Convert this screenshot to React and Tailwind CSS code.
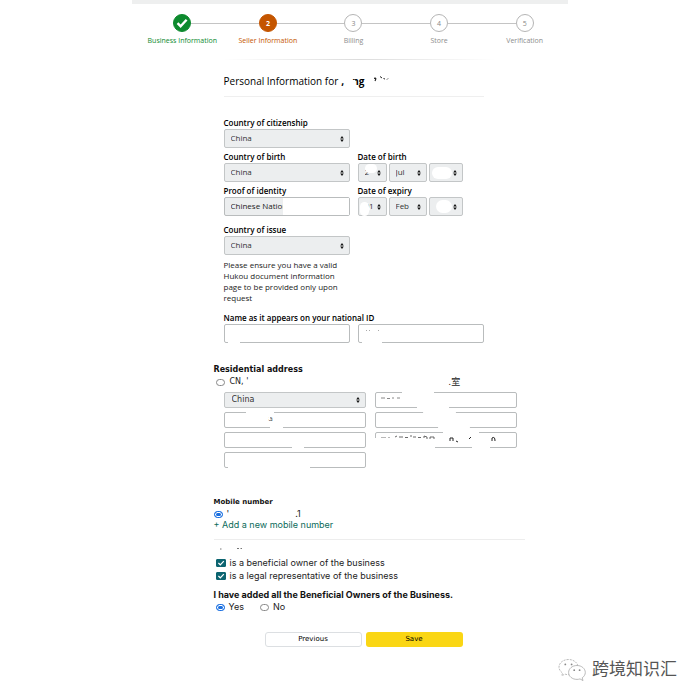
import { useState } from "react";

const steps = [
  { id: 1, name: "Business Information", state: "done" },
  { id: 2, name: "Seller Information", state: "current" },
  { id: 3, name: "Billing", state: "next" },
  { id: 4, name: "Store", state: "next" },
  { id: 5, name: "Verification", state: "next" },
];

const circleStyles = {
  done: "bg-[#0d8a2e] border-[#0d8a2e] text-white font-bold",
  current: "bg-[#c45500] border-[#c45500] text-white font-bold",
  next: "bg-white border-[#b5b5b5] text-[#888]",
};

const labelStyles = {
  done: "text-[#0d8a2e]",
  current: "text-[#c45500]",
  next: "text-[#8d8d8d]",
};

const Stepper = () => (
  <ol className="flex pt-[10px] pl-2">
    {steps.map((step, idx) => (
      <li key={step.id} className="flex-1 min-w-0 flex flex-col items-center">
        <div className="flex items-center w-full">
          <span className={idx === 0 ? "flex-1" : "flex-1 h-px bg-[#c4c4c4]"} />
          <span
            className={`flex items-center justify-center size-[18px] rounded-full border text-[7px] leading-none ${circleStyles[step.state]}`}
          >
            {step.state === "done" ? (
              <svg viewBox="0 0 12 12" className="size-3" fill="none" stroke="currentColor" strokeWidth="2.4">
                <path d="M1.5 6.2 L4.6 9.2 L10.6 2.8" />
              </svg>
            ) : (
              step.id
            )}
          </span>
          <span className={idx === steps.length - 1 ? "flex-1" : "flex-1 h-px bg-[#c4c4c4]"} />
        </div>
        <span className={`mt-1 text-[7px] leading-[10px] whitespace-nowrap ${labelStyles[step.state]}`}>
          {step.name}
        </span>
      </li>
    ))}
  </ol>
);

// white smudge that hides private details
const Patch = ({ className }) => (
  <span className={`absolute bg-white pointer-events-none ${className}`} />
);

const Arrows = () => (
  <svg
    viewBox="0 0 6 8"
    className="absolute right-[5px] top-1/2 -translate-y-1/2 w-[6px] h-2 pointer-events-none"
    fill="#111"
  >
    <path d="M3 1 L4.8 3.4 H1.2 Z M3 7 L4.8 4.6 H1.2 Z" />
  </svg>
);

const Select = ({ id, label, value, className = "", size = "h-[19px] text-[8px] pl-[6px]", children }) => (
  <div className={`relative ${className}`}>
    <select
      id={id}
      aria-label={label}
      defaultValue={value}
      className={`block w-full appearance-none rounded-[2px] border border-[#c3c6c7] bg-[#eceeef] pb-px text-[#333] ${size}`}
    >
      <option value={value}>{value}</option>
    </select>
    {children}
    <Arrows />
  </div>
);

const Label = ({ htmlFor, children }) => (
  <label htmlFor={htmlFor} className="block text-[8px] leading-[12px] font-semibold text-black whitespace-nowrap">
    {children}
  </label>
);

const Input = ({ id, label, value = "", size = "h-[19px]", className = "", children }) => (
  <div className={`relative ${className}`}>
    <input
      id={id}
      aria-label={label}
      type="text"
      defaultValue={value}
      className={`block w-full rounded-[2px] border border-[#b9bcbd] bg-white pl-[6px] text-[8px] text-[#222] ${size}`}
    />
    {children}
  </div>
);

const Radio = ({ name, label, checked, onChange, children }) => (
  <label className="flex items-center gap-1 leading-[12px]">
    <input
      type="radio"
      name={name}
      aria-label={label}
      checked={checked}
      onChange={onChange}
      className="appearance-none w-[9px] h-[7px] rounded-full border border-[#888] bg-white checked:border-[#1a6fe0] checked:bg-[#1a6fe0] checked:shadow-[inset_0_0_0_1px_white]"
    />
    {children}
  </label>
);

const Check = ({ children }) => {
  const [on, setOn] = useState(true);
  return (
    <label className="flex items-center gap-1 h-[13px]">
      <span className="relative flex">
        <input
          type="checkbox"
          checked={on}
          onChange={() => setOn(!on)}
          className="appearance-none w-[10px] h-2 rounded-[1px] border border-[#0c6470] checked:bg-[#0c6470]"
        />
        {on && (
          <svg
            viewBox="0 0 10 8"
            className="absolute inset-0 w-[10px] h-2 pointer-events-none"
            fill="none"
            stroke="white"
            strokeWidth="1.2"
          >
            <path d="M2.4 4 L4.3 5.8 L7.8 2.2" />
          </svg>
        )}
      </span>
      {children}
    </label>
  );
};

const IdentityForm = () => (
  <section className="ml-[10px] flex flex-col">
    <div className="w-[126px]">
      <Label htmlFor="citizenship">Country of citizenship</Label>
      <Select id="citizenship" value="China" />
    </div>

    <div className="flex gap-2 mt-[3px]">
      <div className="w-[126px]">
        <Label htmlFor="birth-country">Country of birth</Label>
        <Select id="birth-country" value="China" />
      </div>
      <div>
        <Label htmlFor="birth-day">Date of birth</Label>
        <div className="flex gap-[2px]">
          <Select id="birth-day" value="2" className="w-[29px]">
            <Patch className="left-[7px] top-[1px] w-3 h-[9px] rounded-full" />
          </Select>
          <Select label="Month of birth" value="Jul" className="w-[38px]" />
          <Select label="Year of birth" value="" className="w-[34px]">
            <Patch className="left-[3px] top-1 w-5 h-3 rounded-full" />
          </Select>
        </div>
      </div>
    </div>

    <div className="flex gap-2 mt-[3px]">
      <div className="w-[126px]">
        <Label htmlFor="proof">Proof of identity</Label>
        <div className="relative">
          <select
            id="proof"
            className="block w-full h-[19px] appearance-none rounded-[2px] border border-[#b9bcbd] bg-[#eceeef] pb-px pl-[6px] text-[8px] text-[#222]"
          >
            <option>Chinese National ID</option>
          </select>
          <Patch className="left-[59px] right-px top-px bottom-px" />
        </div>
      </div>
      <div>
        <Label htmlFor="expiry-day">Date of expiry</Label>
        <div className="flex gap-[2px]">
          <Select id="expiry-day" value="01" className="w-[29px]">
            <Patch className="left-[2px] top-[5px] w-[9px] h-[14px] rounded-full" />
            <Patch className="left-1 top-[10px] w-2 h-1 rounded-full" />
          </Select>
          <Select label="Month of expiry" value="Feb" className="w-[38px]" />
          <Select label="Year of expiry" value="" className="w-[34px]">
            <Patch className="left-[7px] top-[3px] w-4 h-[13px] rounded-full" />
          </Select>
        </div>
      </div>
    </div>

    <div className="w-[126px] mt-[8px]">
      <Label htmlFor="issue">Country of issue</Label>
      <Select id="issue" value="China" />
      <p className="mt-1 text-[8px] leading-[11px] text-[#222]">
        Please ensure you have a valid Hukou document information page to be provided only upon request
      </p>
    </div>

    <div className="mt-[9px]">
      <Label htmlFor="first-name">Name as it appears on your national ID</Label>
      <div className="flex gap-2">
        <Input id="first-name" className="w-[126px]">
          <Patch className="left-1 bottom-0 w-3 h-px" />
        </Input>
        <Input label="Last name" className="w-[126px]">
          <Patch className="left-1 bottom-0 w-5 h-px" />
          <svg viewBox="0 0 16 3" className="absolute left-2 top-[5px] w-4 h-[3px]" stroke="#aaa" fill="none">
            <path d="M0 1.5 H1 M3 1.5 H4 M12 1.5 H13" />
          </svg>
        </Input>
      </div>
    </div>
  </section>
);

const addressSize = "h-4";

const Address = () => {
  const [saved, setSaved] = useState(false);
  return (
    <section className="mt-[21px] font-['DejaVu_Sans','Noto_Sans_CJK_SC',sans-serif] text-[7px] text-[#222]">
      <h2 className="text-[8px] font-bold leading-[12px] text-[#111]">Residential address</h2>
      <div className="pl-[2px]">
        <Radio name="address" checked={saved} onChange={() => setSaved(true)}>
          <span className="ml-px text-[8px]">CN, '</span>
          <span className="ml-[196px] text-[9px]">.室</span>
        </Radio>
      </div>
      <div className="ml-[10px] mt-1 grid grid-cols-[142px_142px] gap-x-[9px] gap-y-1">
        <Select label="Country" value="China" size="h-4 text-[8px] pl-[7px]" />
        <Input label="Province" size={addressSize}>
          <svg viewBox="0 0 30 4" className="absolute left-[6px] top-1 w-[30px] h-1" stroke="#888" fill="none">
            <path d="M0 2 H4 M6 2.5 H9 M11 2 H13 M16 2 H19" />
          </svg>
          <Patch className="left-[27px] top-0 w-8 h-2" />
          <Patch className="left-[42px] bottom-0 w-8 h-[10px]" />
        </Input>
        <Input label="City" size={addressSize}>
          <span className="absolute left-[45px] top-[3px] leading-[9px] text-[#555]">a</span>
          <Patch className="left-[22px] top-0 w-7 h-px" />
          <Patch className="left-[45px] top-[3px] w-px h-[5px]" />
          <Patch className="left-[46px] bottom-0 w-[13px] h-px" />
        </Input>
        <Input label="District" size={addressSize}>
          <Patch className="left-[48px] top-0 w-[33px] h-2 rounded-b-full" />
          <Patch className="left-[63px] bottom-0 w-8 h-2 rounded-t-full" />
        </Input>
        <Input label="Street" size={addressSize}>
          <Patch className="left-[68px] bottom-0 w-3 h-px" />
        </Input>
        <Input label="Building" size={addressSize}>
          <Patch className="left-0 bottom-0 w-[60px] h-[10px]" />
          <Patch className="left-[68px] top-0 w-9 h-[5px]" />
          <svg
            viewBox="0 0 130 16"
            className="absolute left-0 top-0 w-[130px] h-4"
            fill="none"
            stroke="#444"
          >
            <path d="M6 5.5 H11 M13 5.5 H15" stroke="#999" strokeWidth="0.7" />
            <path d="M20 5 L22 4 M24 5 H28 M30 5.5 H33 M36 5 V3 M38 5 H41 M43 5.5 H46 M49 6 V4 L52 5 V7 M55 7 V5 L59 5 V7" strokeWidth="0.8" />
            <path d="M75 9 V6 H78 V9 M81 9 L83 10 M94 7 L96 5 M117 9 V6 Q120 4 120 9" stroke="#222" />
          </svg>
          <Patch className="left-[97px] bottom-0 w-[18px] h-[11px]" />
        </Input>
        <Input label="Postal code" size={addressSize}>
          <Patch className="left-1 bottom-0 w-[82px] h-px" />
        </Input>
      </div>
    </section>
  );
};

const Mobile = () => (
  <section className="mt-7 font-[Inter,sans-serif] text-[9px] text-[#222]">
    <h2 className="text-[7px] font-bold leading-[12px] text-[#111] font-['DejaVu_Sans',sans-serif]">Mobile number</h2>
    <Radio name="mobile" checked onChange={() => {}}>
      <span>'</span>
      <span className="ml-[62px]">.1</span>
    </Radio>
    <a href="#mobile" className="block leading-[9px] text-[#0b6b5a]">
      + Add a new mobile number
    </a>
  </section>
);

const Owners = () => {
  const [added, setAdded] = useState(true);
  return (
    <section className="mt-[10px] border-t border-[#ededed] font-[Inter,sans-serif] text-[9px] text-[#222]">
      <svg viewBox="0 0 32 4" className="block ml-[6px] mt-[6px] w-8 h-1" stroke="#777" fill="none">
        <path d="M0 3 H1.5 M17 2.5 H19 M20.5 2.5 H22" />
      </svg>
      <div className="mt-[6px] pl-[2px]">
        <Check>is a beneficial owner of the business</Check>
        <Check>is a legal representative of the business</Check>
      </div>
      <h2 className="mt-[7px] font-bold leading-[12px] text-[#111] whitespace-nowrap">
        I have added all the Beneficial Owners of the Business.
      </h2>
      <div className="flex gap-4 pl-[2px]">
        <Radio name="owners" checked={added} onChange={() => setAdded(true)}>
          Yes
        </Radio>
        <Radio name="owners" checked={!added} onChange={() => setAdded(false)}>
          No
        </Radio>
      </div>
    </section>
  );
};

const App = () => {
  return (
    <div className="relative min-h-screen bg-white font-['Open_Sans',sans-serif]">
      <main className="mx-auto max-w-[436px]">
        <div className="h-1 bg-[#eeefef]" />
        <Stepper />
        <div className="pl-[82px] pr-[43px]">
          <div className="ml-[10px] mt-[13px] mr-[30px] h-px bg-linear-to-r from-white via-[#dcdcdc] to-white" />
          <h1 className="relative ml-[10px] mr-[41px] pt-[14px] pb-2 flex items-end text-[10px] leading-[14px] text-black border-b border-[#efefef]">
            Personal Information for
            <span className="ml-[3px] font-bold">,</span>
            <span className="relative ml-2 font-bold">
              ng
              <Patch className="left-0 bottom-0 w-[3px] h-2" />
            </span>
            <svg viewBox="0 0 16 8" className="ml-[10px] mb-[5px] w-4 h-2" fill="none" stroke="#222">
              <path d="M0 3.5 Q3 2 1 6" strokeWidth="1.2" />
              <path d="M6 1.5 L8 3 M9.5 3.5 L11 4 M13 4.5 L14 3.5" />
            </svg>
          </h1>
          <div className="mt-5">
            <IdentityForm />
          </div>
          <Address />
          <Mobile />
          <Owners />
          <div className="mt-[19px] ml-[51px] flex gap-1 font-['DejaVu_Sans',sans-serif] text-[7px] text-black">
            <button className="w-[97px] h-[15px] rounded-[3px] border border-[#dcdfe2] bg-white">Previous</button>
            <button className="w-[97px] h-[15px] rounded-[3px] bg-[#fad614]">Save</button>
          </div>
        </div>
      </main>

      <div className="absolute right-[22px] bottom-[18px] flex items-center gap-[6px]">
        <svg viewBox="0 0 28 24" className="w-7 h-6" fill="white" stroke="#aaa" strokeWidth="0.8">
          <path d="M10.5 1.5 C5.3 1.5 1 4.8 1 9.1 C1 11.5 2.4 13.6 4.6 15 L3.8 17.7 L7 16.1 C8.1 16.5 9.3 16.7 10.5 16.7 C15.7 16.7 20 13.3 20 9.1 C20 4.8 15.7 1.5 10.5 1.5 Z" strokeDasharray="2 1" />
          <path d="M19 7.5 C14.3 7.5 10.6 10.6 10.6 14.5 C10.6 18.4 14.3 21.4 19 21.4 C20.1 21.4 21.1 21.2 22 20.9 L25 22.6 L24.2 19.8 C26.1 18.6 27.3 16.6 27.3 14.5 C27.3 10.6 23.6 7.5 19 7.5 Z" />
          <g fill="#888" stroke="none">
            <circle cx="7.3" cy="6.4" r="0.9" />
            <circle cx="13.6" cy="6.4" r="0.9" />
            <circle cx="16.2" cy="12.2" r="0.9" />
            <circle cx="21.6" cy="12.2" r="0.9" />
          </g>
        </svg>
        <span className="font-['Liberation_Sans','Noto_Sans_CJK_SC',sans-serif] text-[17px] leading-6 text-[#555]">
          跨境知识汇
        </span>
      </div>
    </div>
  );
};

export default App;
